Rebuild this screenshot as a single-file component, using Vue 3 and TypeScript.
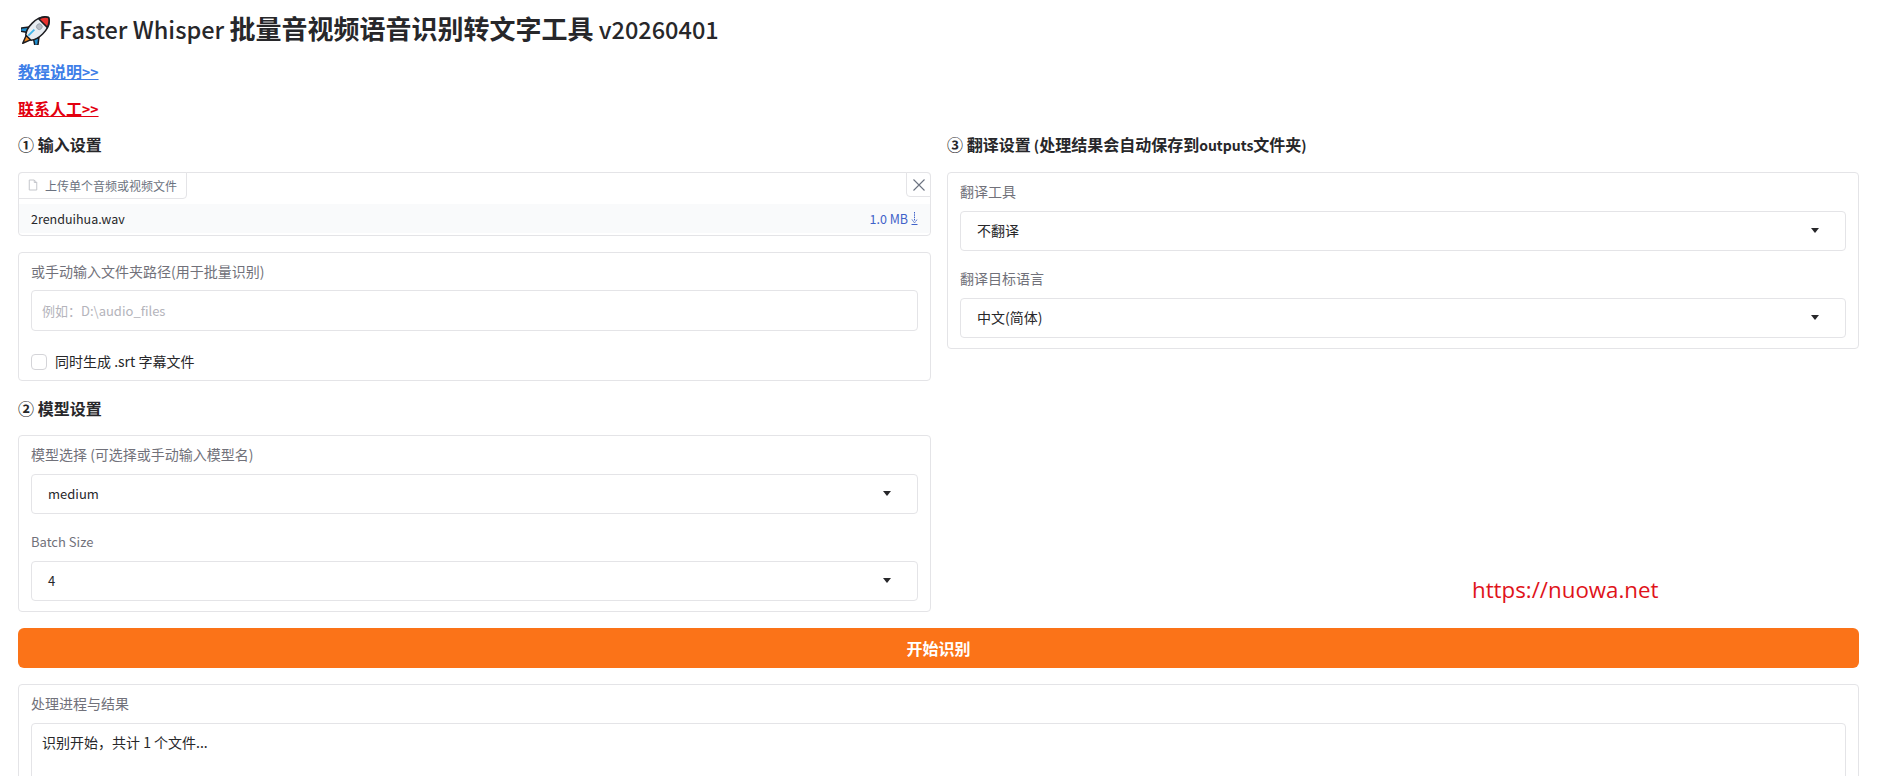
<script setup lang="ts">
const translateFields = [
  { label: "翻译工具", value: "不翻译", latin: false },
  { label: "翻译目标语言", value: "中文(简体)", latin: false },
];
const modelFields = [
  { label: "模型选择 (可选择或手动输入模型名)", value: "medium", latin: false, valueLatin: true },
  { label: "Batch Size", value: "4", latin: true, valueLatin: true },
];
</script>

<template>
  <div class="page">
    <h1 class="title">
      <svg class="rocket" viewBox="0 0 32 32" aria-hidden="true">
        <g transform="rotate(45 16 16)" stroke="#1c1c20" stroke-width="1.6" stroke-linejoin="round">
          <path d="M8.5 19 3.5 25.5 4.5 29 10.5 25Z" fill="#1f8fd0" />
          <path d="M23.5 19 28.5 25.5 27.5 29 21.5 25Z" fill="#1f8fd0" />
          <path d="M12.5 27 16 36 19.500 27Z" fill="#f58a1f" />
          <path d="M16-3C10-0 8 7 8 14 8 20 10 25 12 27.500H20C22 25 24 20 24 14 24 7 22-0 16-3Z" fill="#e8edf2" />
          <path d="M16-3C12.500-1 10.500 2 9.500 5.500H22.500C21.500 2 19.500-1 16-3Z" fill="#e8322e" />
          <path d="M14.500 17V26" stroke="#3fb4e8" stroke-width="2" fill="none" />
          <circle cx="16" cy="11" r="3" fill="#b8bec6" stroke="#9aa2ac" stroke-width="1" />
        </g>
      </svg>
      <span class="title-text">Faster Whisper <b>批量音视频语音识别转文字工具</b> v20260401</span>
    </h1>

    <p class="link-row"><a class="link blue" href="#">教程说明<span class="arrows">&gt;&gt;</span></a></p>
    <p class="link-row"><a class="link red" href="#">联系人工<span class="arrows">&gt;&gt;</span></a></p>

    <div class="columns">
      <section class="column">
        <h3 class="heading">① 输入设置</h3>

        <div class="upload">
          <div class="upload-tab">
            <svg class="file-icon" viewBox="0 0 12 14" aria-hidden="true">
              <path d="M1.500 1H7.500L10.500 4V13H1.500Z M7.500 1V4H10.500" fill="none" stroke="#c4c6cb" stroke-width="1.200" stroke-linejoin="round" />
            </svg>
            <span>上传单个音频或视频文件</span>
          </div>
          <button class="upload-close" type="button" aria-label="清除">
            <svg viewBox="0 0 14 14" width="14" height="14" aria-hidden="true">
              <path d="M1.500 1.500 12.500 12.500M12.500 1.500 1.500 12.500" stroke="#6b7280" stroke-width="1.100" fill="none" />
            </svg>
          </button>
          <div class="file-row">
            <span class="file-name">2renduihua.wav</span>
            <span class="file-size">1.0 MB</span>
            <svg class="download" viewBox="0 0 7 13" aria-hidden="true">
              <path d="M3.500 0V9M1 7.500 3.500 11 6 7.500" stroke="#3f62c9" stroke-width="1" stroke-dasharray="1.500 0.800" fill="none" />
              <path d="M0.500 12.500H6.500" stroke="#3f62c9" stroke-width="1" />
            </svg>
          </div>
        </div>

        <div class="panel folder-panel">
          <label class="field-label">或手动输入文件夹路径(用于批量识别)</label>
          <input class="text-input" type="text" placeholder="例如：D:\audio_files" />
          <label class="check-row">
            <span class="check-box"></span>
            <span class="check-text">同时生成 .srt 字幕文件</span>
          </label>
        </div>

        <h3 class="heading second">② 模型设置</h3>

        <div class="panel stack">
          <div v-for="field in modelFields" :key="field.label" class="field">
            <label class="field-label" :class="{ latin: field.latin }">{{ field.label }}</label>
            <div class="select">
              <span :class="{ latin: field.valueLatin }">{{ field.value }}</span>
              <i class="caret"></i>
            </div>
          </div>
        </div>
      </section>

      <section class="column">
        <h3 class="heading">③ 翻译设置<span class="narrow"> (</span>处理结果会自动保存到<span class="narrow">outputs</span>文件夹<span class="narrow">)</span></h3>

        <div class="panel stack">
          <div v-for="field in translateFields" :key="field.label" class="field">
            <label class="field-label">{{ field.label }}</label>
            <div class="select">
              <span>{{ field.value }}</span>
              <i class="caret"></i>
            </div>
          </div>
        </div>
      </section>
    </div>

    <button class="start" type="button">开始识别</button>

    <div class="panel output">
      <label class="field-label">处理进程与结果</label>
      <div class="output-box">识别开始，共计 1 个文件...</div>
    </div>

    <div class="watermark">https://nuowa.net</div>
  </div>
</template>

<style>
html,
body {
  margin: 0;
  overflow: hidden;
  background: #fff;
}
</style>

<style scoped>
.page {
  position: relative;
  box-sizing: border-box;
  height: 776px;
  overflow: hidden;
  padding: 0 22px 0 18px;
  font-family: "Noto Sans CJK SC", "Noto Sans", sans-serif;
  color: #27272a;
  font-size: 14px;
}

.title {
  display: flex;
  align-items: center;
  gap: 8px;
  height: 30px;
  margin: 0;
  padding: 15px 0 0 3px;
  font-size: 23.5px;
  font-weight: 500;
  line-height: 30px;
  white-space: nowrap;
}
.title-text {
  margin-bottom: 4px;
}
.title b {
  font-size: 26px;
  font-weight: 700;
}
.rocket {
  width: 30px;
  height: 30px;
  flex: none;
}

.link-row {
  height: 22px;
  margin: 0;
  line-height: 22px;
  font-size: 16px;
  font-weight: 700;
}
.link-row:first-of-type {
  margin-top: 15px;
}
.link-row + .link-row {
  margin-top: 15px;
}
.link {
  text-decoration: underline;
}
.arrows {
  font-size: 14px;
}
.blue {
  color: #3f7fe8;
}
.red {
  color: #e3000f;
}

.columns {
  display: grid;
  grid-template-columns: 913px 912px;
  gap: 16px;
  margin-top: 14px;
}
.column {
  min-width: 0;
}
.heading {
  margin: 0 0 17px;
  height: 22px;
  line-height: 22px;
  font-size: 16px;
  font-weight: 700;
}
.heading.second {
  margin: 16px 0 16px;
}
.narrow {
  font-size: 14px;
}

.upload {
  position: relative;
  box-sizing: border-box;
  height: 64px;
  margin-bottom: 16px;
  border: 1px solid #e4e4e7;
  border-radius: 4px;
  padding-top: 31px;
}
.upload-tab {
  position: absolute;
  top: -1px;
  left: -1px;
  box-sizing: border-box;
  display: flex;
  align-items: center;
  gap: 7px;
  width: 169px;
  height: 27px;
  padding: 0 0 1px 9px;
  border: 1px solid #e4e4e7;
  border-radius: 4px 0 4px 0;
  background: #fff;
  color: #6b7280;
  font-size: 12px;
}
.file-icon {
  width: 10px;
  height: 12px;
  flex: none;
}
.upload-close {
  position: absolute;
  top: -1px;
  right: -1px;
  display: flex;
  align-items: center;
  justify-content: center;
  width: 25px;
  height: 25px;
  padding: 0;
  border: 1px solid #e4e4e7;
  border-radius: 0 4px 0 4px;
  background: #fff;
}
.file-row {
  display: flex;
  align-items: center;
  height: 29px;
  padding: 0 12px 1px;
  box-sizing: border-box;
  background: #f9fafb;
  font-size: 12.5px;
}
.file-name {
  flex: 1;
}
.file-size {
  color: #3f62c9;
  font-size: 12.5px;
}
.download {
  width: 7px;
  height: 13px;
  margin-left: 3px;
}

.panel {
  box-sizing: border-box;
  border: 1px solid #e4e4e7;
  border-radius: 4px;
  background: #fff;
  padding: 10px 12px 10px;
}
.folder-panel {
  height: 129px;
}
.field-label {
  display: block;
  height: 20px;
  line-height: 17px;
  color: #71717a;
  font-size: 14px;
}
.latin {
  font-size: 13px;
}
.text-input {
  display: block;
  box-sizing: border-box;
  width: 100%;
  height: 41px;
  margin-top: 7px;
  padding: 0 10px 1px;
  border: 1px solid #e4e4e7;
  border-radius: 4px;
  outline: none;
  font: inherit;
  font-size: 13px;
}
.text-input::placeholder {
  color: #b4b4bb;
}
.check-row {
  display: flex;
  align-items: center;
  gap: 8px;
  margin-top: 20px;
  font-size: 14px;
  line-height: 20px;
}
.check-text {
  margin-bottom: 2px;
}
.check-box {
  box-sizing: border-box;
  width: 16px;
  height: 16px;
  border: 1px solid #d4d4d8;
  border-radius: 4px;
  background: #fff;
}

.stack {
  display: flex;
  flex-direction: column;
  gap: 19px;
}
.select {
  box-sizing: border-box;
  display: flex;
  align-items: center;
  justify-content: space-between;
  height: 40px;
  margin-top: 8px;
  padding: 0 26px 2px 16px;
  border: 1px solid #e4e4e7;
  border-radius: 4px;
  font-size: 14px;
}
.caret {
  width: 0;
  height: 0;
  border-left: 4.5px solid transparent;
  border-right: 4.5px solid transparent;
  border-top: 5px solid #27272a;
}

.start {
  display: block;
  width: 100%;
  height: 40px;
  margin-top: 16px;
  border: 0;
  border-radius: 6px;
  background: #fb7318;
  color: #fff;
  font: inherit;
  font-size: 16px;
  font-weight: 700;
}

.output {
  height: 200px;
  margin-top: 16px;
}
.output-box {
  box-sizing: border-box;
  height: 160px;
  margin-top: 8px;
  padding: 8px 10px;
  border: 1px solid #e4e4e7;
  border-radius: 4px;
  font-size: 14px;
  line-height: 20px;
}

.watermark {
  position: absolute;
  top: 573px;
  left: 1472px;
  color: #e0131a;
  font-family: "Open Sans", sans-serif;
  font-size: 22.3px;
  line-height: 34px;
}
</style>
